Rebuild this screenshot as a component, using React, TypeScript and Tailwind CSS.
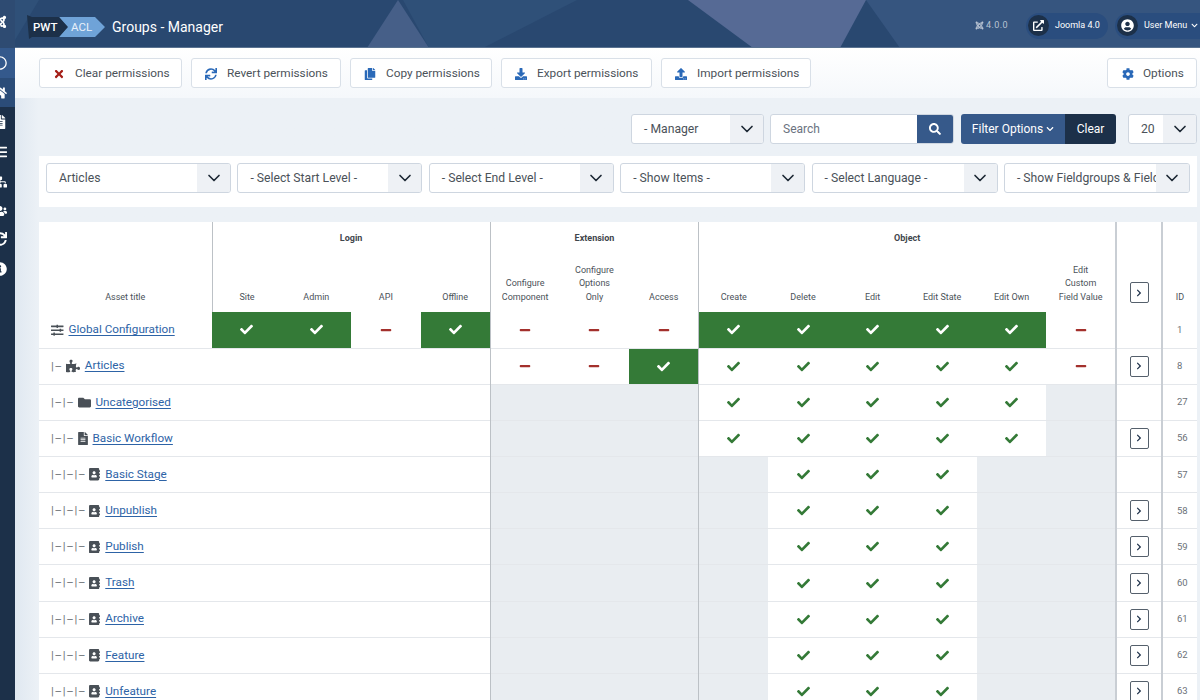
import type { ReactNode } from 'react';
import { ChevronDown } from 'lucide-react';
import {
  FaAddressBook,
  FaCheck,
  FaChevronDown,
  FaChevronRight,
  FaCog,
  FaCopy,
  FaDownload,
  FaExternalLinkAlt,
  FaFileAlt,
  FaFolder,
  FaHome,
  FaInfoCircle,
  FaJoomla,
  FaList,
  FaMinus,
  FaPuzzlePiece,
  FaRegCircle,
  FaSearch,
  FaSitemap,
  FaSlidersH,
  FaSync,
  FaTimes,
  FaUpload,
  FaUserCircle,
  FaUsers,
} from 'react-icons/fa';

// G = allowed (filled), c = check, m = denied, x = not available, '' = blank
type Cell = 'G' | 'c' | 'm' | 'x' | '';

type Row = {
  id: number;
  title: string;
  level: number;
  icon: ReactNode;
  arrow: boolean;
  login?: Cell[];
  ext: Cell[];
  obj: Cell[];
};

const stageIcon = <FaAddressBook className="w-[11px] text-[12.5px] text-[#495057]" />;
const xxx: Cell[] = ['x', 'x', 'x'];
const stageObj: Cell[] = ['x', 'c', 'c', 'c', 'x', 'x'];

const rows: Row[] = [
  {
    id: 1,
    title: 'Global Configuration',
    level: 0,
    icon: <FaSlidersH className="text-[12.5px] text-[#495057]" />,
    arrow: false,
    login: ['G', 'G', 'm', 'G'],
    ext: ['m', 'm', 'm'],
    obj: ['G', 'G', 'G', 'G', 'G', 'm'],
  },
  {
    id: 8,
    title: 'Articles',
    level: 1,
    icon: <FaPuzzlePiece className="text-[14px] text-[#495057]" />,
    arrow: true,
    ext: ['m', 'm', 'G'],
    obj: ['c', 'c', 'c', 'c', 'c', 'm'],
  },
  {
    id: 27,
    title: 'Uncategorised',
    level: 2,
    icon: <FaFolder className="text-[13px] text-[#495057]" />,
    arrow: false,
    ext: xxx,
    obj: ['c', 'c', 'c', 'c', 'c', 'x'],
  },
  {
    id: 56,
    title: 'Basic Workflow',
    level: 2,
    icon: <FaFileAlt className="w-[10px] text-[13px] text-[#495057]" />,
    arrow: true,
    ext: xxx,
    obj: ['c', 'c', 'c', 'c', 'c', 'x'],
  },
  { id: 57, title: 'Basic Stage', level: 3, icon: stageIcon, arrow: false, ext: xxx, obj: stageObj },
  { id: 58, title: 'Unpublish', level: 3, icon: stageIcon, arrow: true, ext: xxx, obj: stageObj },
  { id: 59, title: 'Publish', level: 3, icon: stageIcon, arrow: true, ext: xxx, obj: stageObj },
  { id: 60, title: 'Trash', level: 3, icon: stageIcon, arrow: true, ext: xxx, obj: stageObj },
  { id: 61, title: 'Archive', level: 3, icon: stageIcon, arrow: true, ext: xxx, obj: stageObj },
  { id: 62, title: 'Feature', level: 3, icon: stageIcon, arrow: true, ext: xxx, obj: stageObj },
  { id: 63, title: 'Unfeature', level: 3, icon: stageIcon, arrow: true, ext: xxx, obj: stageObj },
];

const toolbarButtons = [
  { label: 'Clear permissions', icon: <FaTimes className="text-[12px] text-[#a51f18]" />, width: 'w-[143px]' },
  { label: 'Revert permissions', icon: <FaSync className="text-[12px] text-[#2a69b8]" />, width: 'w-[150px]' },
  { label: 'Copy permissions', icon: <FaCopy className="text-[12px] text-[#2a69b8]" />, width: 'w-[142px]' },
  { label: 'Export permissions', icon: <FaDownload className="text-[12px] text-[#2a69b8]" />, width: 'w-[151px]' },
  { label: 'Import permissions', icon: <FaUpload className="text-[12px] text-[#2a69b8]" />, width: 'w-[150px]' },
];

const sidebarItems = [
  { icon: <FaJoomla />, cls: 'h-12 pb-[4px] bg-[#2e4b72]' },
  { icon: <FaRegCircle />, cls: 'h-[30px] bg-[#34598c]' },
  { icon: <FaHome />, cls: 'h-[29px] bg-[#2b4c78]' },
  { icon: <FaFileAlt />, cls: 'h-[30px]' },
  { icon: <FaList />, cls: 'h-[30px]' },
  { icon: <FaSitemap />, cls: 'h-[30px]' },
  { icon: <FaUsers />, cls: 'h-[28px]' },
  { icon: <FaSync />, cls: 'h-[28px]' },
  { icon: <FaInfoCircle />, cls: 'h-[32px]' },
];

const Select = ({ label, className }: { label: string; className: string }) => (
  <div className={`flex h-[30px] overflow-hidden rounded-[3px] border border-[#ced6e0] bg-white ${className}`}>
    <div className="flex-1 overflow-hidden whitespace-nowrap pl-3 pr-[2px] text-[12.2px] leading-[28px] text-[#4b5259]">
      {label}
    </div>
    <div className="flex w-[33px] shrink-0 items-center justify-center bg-[#eef1f5]">
      <ChevronDown size={20} strokeWidth={2} className="text-[#1c2733]" />
    </div>
  </div>
);

const ArrowButton = () => (
  <div className="mx-auto flex h-[21px] w-[19px] items-center justify-center rounded-[2px] border border-[#55606c]">
    <FaChevronRight className="text-[8px] text-[#1c3049]" />
  </div>
);

const StatusCell = ({ value, edge = '' }: { value: Cell; edge?: string }) => {
  const bg = value === 'G' ? 'bg-[#347a37]' : value === 'x' ? 'bg-[#e9edf1]' : '';
  return (
    <td className={`p-0 ${bg} ${edge}`}>
      {value === 'G' && <FaCheck className="mx-auto text-[13px] text-white" />}
      {value === 'c' && <FaCheck className="mx-auto text-[13px] text-[#347a37]" />}
      {value === 'm' && <FaMinus className="mx-auto text-[12px] text-[#a3302c]" />}
    </td>
  );
};

const HeadCell = ({ children, edge = '' }: { children: ReactNode; edge?: string }) => (
  <th className={`h-[57px] pb-[8px] align-bottom text-[9px] font-normal leading-[13.3px] text-[#4b5259] ${edge}`}>
    {children}
  </th>
);

const thin = 'border-r border-r-[#bcc1c6]';
const thick = 'border-r-2 border-r-[#c9ced4]';

const PermissionTable = () => (
  <table className="w-[1158px] table-fixed border-collapse bg-white">
    <colgroup>
      <col className="w-[173px]" />
      {Array.from({ length: 13 }).map((_, i) => (
        <col key={i} className="w-[69.54px]" />
      ))}
      <col className="w-[46px]" />
      <col className="w-[35px]" />
    </colgroup>
    <thead>
      <tr>
        <th rowSpan={2} className={`pb-[8px] align-bottom text-[9px] font-normal text-[#4b5259] ${thin}`}>
          Asset title
        </th>
        <th colSpan={4} className={`h-[33px] text-[9px] font-bold text-[#3f464d] ${thin}`}>
          Login
        </th>
        <th colSpan={3} className={`text-[9px] font-bold text-[#3f464d] ${thin}`}>
          Extension
        </th>
        <th colSpan={6} className={`text-[9px] font-bold text-[#3f464d] ${thick}`}>
          Object
        </th>
        <th rowSpan={2} className={`pb-[9px] align-bottom ${thick}`}>
          <ArrowButton />
        </th>
        <th rowSpan={2} className="pb-[8px] align-bottom text-[9px] font-normal text-[#4b5259]">
          ID
        </th>
      </tr>
      <tr>
        <HeadCell>Site</HeadCell>
        <HeadCell>Admin</HeadCell>
        <HeadCell>API</HeadCell>
        <HeadCell edge={thin}>Offline</HeadCell>
        <HeadCell>
          Configure
          <br />
          Component
        </HeadCell>
        <HeadCell>
          Configure
          <br />
          Options
          <br />
          Only
        </HeadCell>
        <HeadCell edge={thin}>Access</HeadCell>
        <HeadCell>Create</HeadCell>
        <HeadCell>Delete</HeadCell>
        <HeadCell>Edit</HeadCell>
        <HeadCell>Edit State</HeadCell>
        <HeadCell>Edit Own</HeadCell>
        <HeadCell edge={thick}>
          Edit
          <br />
          Custom
          <br />
          Field Value
        </HeadCell>
      </tr>
    </thead>
    <tbody>
      {rows.map((row) => (
        <tr key={row.id} className="h-[36.15px] border-b border-b-[#e4e7eb]">
          <td colSpan={row.login ? 1 : 5} className={`pl-3 ${row.login ? '' : thin}`}>
            <div className="flex items-center whitespace-nowrap text-[11.7px]">
              {row.level > 0 && (
                <span className="mr-[3px] text-[11.5px] tracking-[0.7px] text-[#6f7479]">
                  {'|–'.repeat(row.level)}
                </span>
              )}
              {row.icon}
              <a className="ml-[5px] text-[#2d63a6] underline underline-offset-2">{row.title}</a>
            </div>
          </td>
          {row.login?.map((c, i) => <StatusCell key={i} value={c} edge={i === 3 ? thin : ''} />)}
          {row.ext.map((c, i) => (
            <StatusCell key={i} value={c} edge={i === 2 ? thin : ''} />
          ))}
          {row.obj.map((c, i) => (
            <StatusCell key={i} value={c} edge={i === 5 ? thick : ''} />
          ))}
          <td className={thick}>{row.arrow && <ArrowButton />}</td>
          <td className="pl-[14px] text-[9.5px] text-[#6b7178]">{row.id}</td>
        </tr>
      ))}
    </tbody>
  </table>
);

export default function App() {
  return (
    <div className="flex h-[700px] w-[1200px] overflow-hidden font-['Roboto',sans-serif]">
      <aside className="w-[15px] shrink-0 overflow-hidden bg-[#1c3049] text-[14px] text-white">
        {sidebarItems.map((item, i) => (
          <div key={i} className={`flex items-center ${item.cls}`}>
            <span className="-ml-[7px] flex w-[14px] justify-center">{item.icon}</span>
          </div>
        ))}
      </aside>

      <main className="min-w-0 flex-1 bg-gradient-to-r from-[#e0e8f1] to-[#ecf1f6] to-2%">
        <header className="relative flex h-12 items-center overflow-hidden border-b border-b-[#5a7391] bg-[#294870]">
          {/* background shapes */}
          <svg className="absolute left-0 top-0" width="1185" height="48" viewBox="0 0 1185 48">
            <polygon points="0,0 24,0 0,40" fill="#2f5078" />
            <polygon points="388,0 562,0 468,48 414,48" fill="#2f5078" />
            <polygon points="383,0 352,48 414,48" fill="#465f88" />
            <polygon points="673,0 851,0 825,48 738,48" fill="#566a95" />
            <polygon points="851,0 1185,0 1185,48 885,48" fill="#36557f" />
          </svg>
          <svg className="relative ml-[12px] mt-[6px]" width="78" height="24" viewBox="0 0 78 24">
            <polygon points="32,2 68,2 78,12 68,22 32,22 40,12" fill="#6fa3d8" />
            <polygon points="0,0 5,2 32,2 41,12 32,22 5,22 2,24" fill="#1c3049" />
            <text x="6" y="16" fontSize="11.5" fontWeight="500" fill="#fff" fontFamily="Roboto">
              PWT
            </text>
            <text x="44" y="16" fontSize="11.5" fill="#e8f0fa" fontFamily="Roboto">
              ACL
            </text>
          </svg>
          <h1 className="relative ml-[7px] mt-[8px] text-[14px] text-white">Groups - Manager</h1>

          <div className="relative ml-auto mt-[4px] flex items-center">
            <div className="mr-[18px] flex items-center gap-[2px] text-[9px] tracking-[0.4px] text-[#b9c4d3]">
              <FaJoomla className="text-[9px]" />
              4.0.0
            </div>
            <div className="mr-[7px] flex h-[26px] w-[82px] items-center rounded-full bg-[#2a4d7e] pl-[2px]">
              <div className="flex h-[21px] w-[21px] items-center justify-center rounded-full bg-[#1c3049]">
                <FaExternalLinkAlt className="text-[11px] text-white" />
              </div>
              <span className="ml-[6px] text-[9px] text-white">Joomla 4.0</span>
            </div>
            <div className="-mr-[1px] flex h-[26px] w-[86px] items-center rounded-l-full bg-[#2a4d7e] pl-[2px]">
              <div className="flex h-[21px] w-[21px] items-center justify-center rounded-full bg-[#1c3049]">
                <FaUserCircle className="text-[13px] text-white" />
              </div>
              <span className="ml-[6px] whitespace-nowrap text-[9px] text-white">User Menu</span>
              <FaChevronDown className="ml-[4px] text-[7px] text-white" />
            </div>
          </div>
        </header>

        <div className="flex h-[50px] items-center bg-gradient-to-b from-white to-[#f5f8fb] pl-6 pr-[3px]">
          <div className="flex gap-[9px]">
            {toolbarButtons.map((btn) => (
              <button
                key={btn.label}
                className={`flex h-[30px] items-center rounded-[3px] border border-[#d9e0e8] bg-white pl-[13px] pt-[1px] text-[11.8px] text-[#4b5259] ${btn.width}`}
              >
                <span className="flex w-[22px] justify-start">{btn.icon}</span>
                {btn.label}
              </button>
            ))}
          </div>
          <button className="ml-auto flex h-[30px] w-[90px] items-center rounded-[3px] border border-[#d9e0e8] bg-white pl-[14px] pt-[1px] text-[11.8px] text-[#4b5259]">
            <FaCog className="mr-[9px] text-[12px] text-[#2a69b8]" />
            Options
          </button>
        </div>

        <div className="pl-6 pr-[3px]">
          <div className="mt-4 flex justify-end">
            <Select label="- Manager" className="w-[133px]" />
            <div className="ml-[6px] flex h-[30px] w-[184px] overflow-hidden rounded-[3px] border border-[#ced6e0] bg-white">
              <div className="flex-1 pl-3 text-[12px] leading-[28px] text-[#6b7280]">Search</div>
              <div className="flex w-[36px] items-center justify-center bg-[#36598a]">
                <FaSearch className="text-[12px] text-white" />
              </div>
            </div>
            <div className="ml-[7px] flex h-[30px] overflow-hidden rounded-[3px] text-[12px] text-white">
              <div className="flex w-[104px] items-center justify-center gap-[3px] bg-[#36598a]">
                Filter Options
                <FaChevronDown className="text-[8px]" />
              </div>
              <div className="flex w-[51px] items-center justify-center bg-[#1c3049]">Clear</div>
            </div>
            <Select label="20" className="ml-3 w-[69px]" />
          </div>

          <div className="mt-[12px] flex h-[51px] items-start justify-between bg-white px-[7px] pt-[7px]">
            <Select label="Articles" className="w-[185px]" />
            <Select label="- Select Start Level -" className="w-[185px]" />
            <Select label="- Select End Level -" className="w-[185px]" />
            <Select label="- Show Items -" className="w-[185px]" />
            <Select label="- Select Language -" className="w-[186px]" />
            <Select label="- Show Fieldgroups & Fields -" className="w-[186px]" />
          </div>

          <div className="mt-[15px]">
            <PermissionTable />
          </div>
        </div>
      </main>
    </div>
  );
}
